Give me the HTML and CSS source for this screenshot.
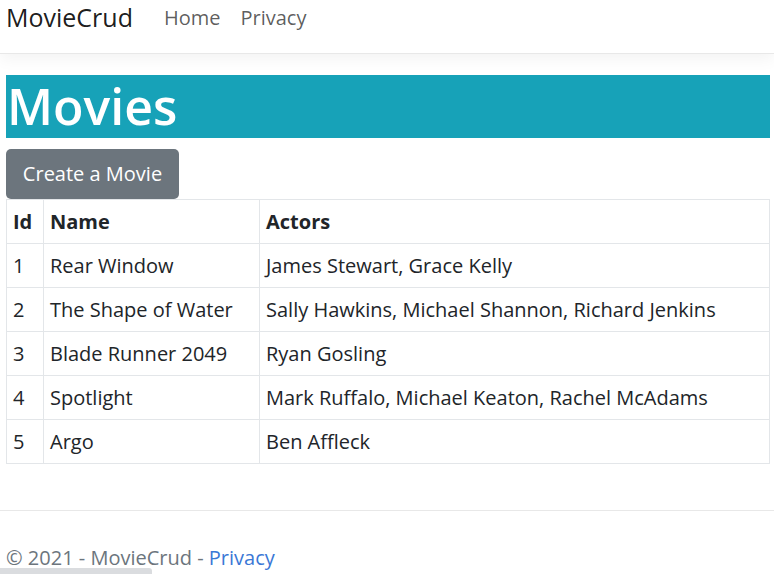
FILE: index.html
```html
<!DOCTYPE html>
<html lang="en">
<head>
<meta charset="utf-8">
<title>Movies - MovieCrud</title>
<link rel="stylesheet" href="styles.css">
</head>
<body>
<header class="navbar">
  <a class="brand" href="#">MovieCrud</a>
  <nav class="nav">
    <a class="nav-link" href="#">Home</a>
    <a class="nav-link" href="#">Privacy</a>
  </nav>
</header>
<main class="container">
  <h1 class="title">Movies</h1>
  <a class="btn" href="#">Create a Movie</a>
  <table class="table">
    <thead>
      <tr><th class="col-id">Id</th><th class="col-name">Name</th><th>Actors</th></tr>
    </thead>
    <tbody>
      <tr><td>1</td><td>Rear Window</td><td>James Stewart, Grace Kelly</td></tr>
      <tr><td>2</td><td>The Shape of Water</td><td>Sally Hawkins, Michael Shannon, Richard Jenkins</td></tr>
      <tr><td>3</td><td>Blade Runner 2049</td><td>Ryan Gosling</td></tr>
      <tr><td>4</td><td>Spotlight</td><td>Mark Ruffalo, Michael Keaton, Rachel McAdams</td></tr>
      <tr><td>5</td><td>Argo</td><td>Ben Affleck</td></tr>
    </tbody>
  </table>
</main>
<footer class="footer">
  <div class="footer-inner">© 2021 - MovieCrud - <a class="footer-link" href="#">Privacy</a></div>
</footer>
<div class="scrollbar"></div>
</body>
</html>
```
FILE: styles.css
```css
html, body {
  margin: 0;
  padding: 0;
  background: #fff;
}
body {
  font-family: "Open Sans", "Noto Sans", sans-serif;
  font-size: 20px;
  color: #212529;
  height: 574px;
  overflow: hidden;
  position: relative;
}
a { text-decoration: none; }

.navbar {
  display: flex;
  align-items: center;
  height: 54px;
  padding: 0 0 19px 6px;
  box-sizing: border-box;
  border-bottom: 1px solid #e8e8e8;
  box-shadow: 0 5px 15px rgba(0,0,0,.05);
}
.brand {
  font-size: 25px;
  color: rgba(0,0,0,.9);
  margin-right: 31px;
}
.nav {
  display: flex;
  gap: 20px;
}
.nav-link {
  font-size: 20px;
  color: rgba(0,0,0,.65);
}

.container {
  padding: 0 4px 0 6px;
  margin-top: 21px;
}
.title {
  margin: 0 0 11px;
  height: 63px;
  background: #17a2b8;
  color: #fff;
  font-size: 50px;
  font-weight: 600;
  line-height: 63px;
  padding-left: 1px;
}
.btn {
  display: inline-block;
  box-sizing: border-box;
  width: 173px;
  height: 50px;
  line-height: 50px;
  text-align: center;
  background: #6c757d;
  color: #fff;
  border-radius: 5px;
  font-size: 20px;
}
.table {
  width: 764px;
  border-collapse: collapse;
  margin-top: 0;
}
.table th, .table td {
  border: 1px solid #e3e6e9;
  padding: 0 6px;
  height: 43px;
  text-align: left;
  vertical-align: middle;
  line-height: 30px;
}
.table th { font-weight: 700; }
.col-id { width: 24px; }
.col-name { width: 203px; }

.footer {
  margin-top: 46px;
  border-top: 1px solid #e8e8e8;
}
.footer-inner {
  padding: 32px 0 0 6px;
  color: #6c757d;
  line-height: 30px;
}
.footer-link { color: #3a78d6; }

.scrollbar {
  position: absolute;
  left: 0;
  bottom: 0;
  width: 152px;
  height: 6px;
  background: #dadcdf;
  border-radius: 0 3px 0 0;
}
```
